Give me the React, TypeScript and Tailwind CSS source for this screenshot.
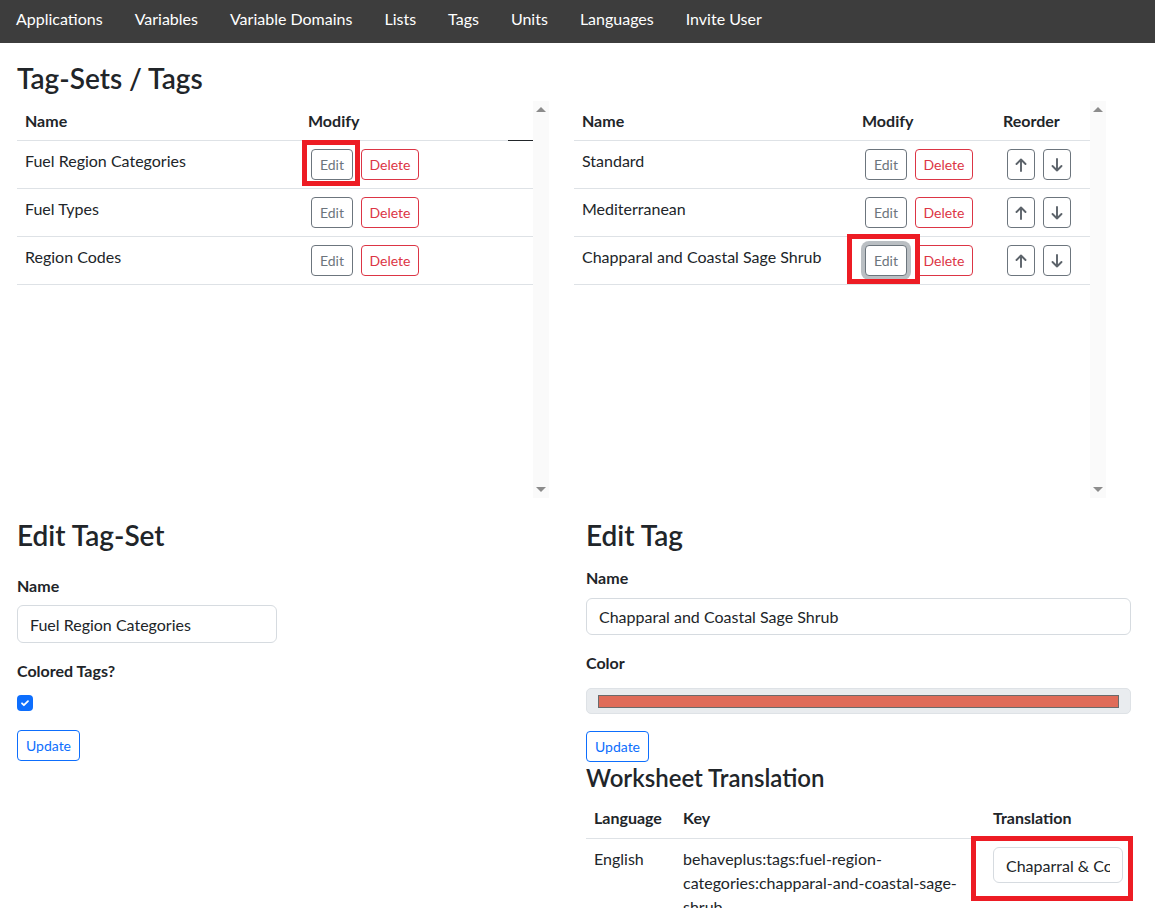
import React from "react";

const navItems = [
  "Applications",
  "Variables",
  "Variable Domains",
  "Lists",
  "Tags",
  "Units",
  "Languages",
  "Invite User",
];

const tagSets = ["Fuel Region Categories", "Fuel Types", "Region Codes"];
const tags = ["Standard", "Mediterranean", "Chapparal and Coastal Sage Shrub"];

const ArrowUp = () => (
  <svg width="14" height="16" viewBox="0 0 14 16" fill="none" stroke="currentColor" strokeWidth="1.9" strokeLinecap="round" strokeLinejoin="round">
    <path d="M7 14V2.5M2.5 7 7 2.5 11.5 7" />
  </svg>
);

const ArrowDown = () => (
  <svg width="14" height="16" viewBox="0 0 14 16" fill="none" stroke="currentColor" strokeWidth="1.9" strokeLinecap="round" strokeLinejoin="round">
    <path d="M7 2v11.5M2.5 9 7 13.5 11.5 9" />
  </svg>
);

// fake classic scrollbar beside each list box
const Scrollbar = () => (
  <div className="w-[16px] bg-[#fafafa] flex flex-col justify-between items-center py-[6px]">
    <div className="w-0 h-0 border-l-[5px] border-r-[5px] border-b-[5px] border-l-transparent border-r-transparent border-b-[#8c8c8c]" />
    <div className="w-0 h-0 border-l-[5px] border-r-[5px] border-t-[5px] border-l-transparent border-r-transparent border-t-[#8c8c8c]" />
  </div>
);

const Highlight = ({ className }: { className: string }) => (
  <span className={`absolute border-[5px] border-[#ed1c24] pointer-events-none ${className}`} />
);

const EditBtn = ({ focused }: { focused?: boolean }) => (
  <button
    className={
      focused
        ? "h-[31px] w-[42px] text-[14px] text-[#6c757d] border border-[#6c757d] rounded-[4px] bg-white shadow-[0_0_0_4px_rgba(130,138,145,0.55)]"
        : "h-[31px] w-[42px] text-[14px] text-[#6c757d] border border-[#6c757d] rounded-[4px] bg-white"
    }
  >
    Edit
  </button>
);

const DeleteBtn = () => (
  <button className="h-[31px] w-[58px] text-[14px] text-[#dc3545] border border-[#dc3545] rounded-[4px] bg-white">
    Delete
  </button>
);

const App = () => {
  return (
    <div className="font-['Lato',sans-serif] text-[#212529] text-[16px] bg-white min-h-[908px]">
      <nav className="h-[43px] bg-[#3d3d3d] flex items-center">
        {navItems.map((n) => (
          <span key={n} className="px-4 text-white leading-[24px] -mt-[6px]">
            {n}
          </span>
        ))}
      </nav>

      <div className="pl-[17px]">
        <h3 className="text-[28px] font-semibold leading-[34px] mt-[18px]">Tag-Sets / Tags</h3>

        <div className="flex gap-[25px] mt-[6px]">
          {/* tag sets */}
          <div className="flex h-[397px] w-[532px]">
            <div className="w-[516px]">
              <div className="flex h-[40px] border-b border-[#dee2e6] font-bold items-center">
                <div className="w-[283px] px-2">Name</div>
                <div className="w-[208px] px-2">Modify</div>
                <div className="w-[25px] self-end h-px bg-[#212529] -mb-px" />
              </div>
              {tagSets.map((t, i) => (
                <div key={t} className="flex h-[48px] border-b border-[#dee2e6]">
                  <div className="w-[283px] px-2 pt-2 leading-[24px]">{t}</div>
                  <div className="flex gap-2 pl-[11px] pt-[8px]">
                    <div className="relative">
                      <EditBtn />
                      {i === 0 && <Highlight className="-left-[9px] -top-[9px] w-[58px] h-[46px]" />}
                    </div>
                    <DeleteBtn />
                  </div>
                </div>
              ))}
            </div>
            <Scrollbar />
          </div>

          {/* tags */}
          <div className="flex h-[397px] w-[532px]">
            <div className="w-[516px]">
              <div className="flex h-[40px] border-b border-[#dee2e6] font-bold items-center">
                <div className="w-[280px] px-2">Name</div>
                <div className="w-[141px] px-2">Modify</div>
                <div className="px-2">Reorder</div>
              </div>
              {tags.map((t, i) => (
                <div key={t} className="flex h-[48px] border-b border-[#dee2e6]">
                  <div className="w-[280px] px-2 pt-2 leading-[24px]">{t}</div>
                  <div className="w-[141px] flex gap-2 pl-[11px] pt-[8px]">
                    <div className="relative">
                      <EditBtn focused={i === 2} />
                      {i === 2 && <Highlight className="-left-[18px] -top-[11px] w-[73px] h-[50px]" />}
                    </div>
                    <DeleteBtn />
                  </div>
                  <div className="flex gap-2 pl-[12px] pt-[8px]">
                    <button className="h-[31px] w-[28px] flex items-center justify-center text-[#5c636a] border border-[#6c757d] rounded-[4px]">
                      <ArrowUp />
                    </button>
                    <button className="h-[31px] w-[28px] flex items-center justify-center text-[#5c636a] border border-[#6c757d] rounded-[4px]">
                      <ArrowDown />
                    </button>
                  </div>
                </div>
              ))}
            </div>
            <Scrollbar />
          </div>
        </div>

        <div className="flex gap-[25px] mt-[20px]">
          {/* edit tag set */}
          <div className="w-[544px]">
            <h3 className="text-[28px] font-semibold leading-[34px]">Edit Tag-Set</h3>
            <div className="font-bold leading-[24px] mt-[22px]">Name</div>
            <input
              readOnly
              value="Fuel Region Categories"
              className="mt-[7px] w-[260px] h-[38px] px-3 border border-[#d6dbe0] rounded-[6px] outline-none"
            />
            <div className="font-bold leading-[24px] mt-[16px]">Colored Tags?</div>
            <div className="mt-[12px] w-[16px] h-[16px] rounded-[4px] bg-[#0d6efd] flex items-center justify-center">
              <svg width="12" height="12" viewBox="0 0 20 20">
                <path fill="none" stroke="#fff" strokeLinecap="round" strokeLinejoin="round" strokeWidth="3" d="m5 10.5 3.2 3.2L15 7" />
              </svg>
            </div>
            <button className="mt-[19px] h-[31px] px-2 text-[14px] text-[#0d6efd] border border-[#0d6efd] rounded-[4px]">
              Update
            </button>
          </div>

          {/* edit tag */}
          <div className="w-[545px]">
            <h3 className="text-[28px] font-semibold leading-[34px]">Edit Tag</h3>
            <div className="font-bold leading-[24px] mt-[14px]">Name</div>
            <input
              readOnly
              value="Chapparal and Coastal Sage Shrub"
              className="mt-[8px] w-full h-[37px] px-3 border border-[#d6dbe0] rounded-[6px] outline-none"
            />
            <div className="font-bold leading-[24px] mt-[16px]">Color</div>
            <div className="mt-[13px] h-[26px] w-full bg-[#e9ecef] border border-[#dee2e6] rounded-[5px] px-[11px] flex items-center">
              <div className="h-[13px] w-full bg-[#e06c59] border border-[#6b6b6b]" />
            </div>
            <button className="mt-[17px] h-[31px] px-2 text-[14px] text-[#0d6efd] border border-[#0d6efd] rounded-[4px]">
              Update
            </button>
            <h4 className="text-[24px] font-semibold leading-[29px] mt-[1px]">Worksheet Translation</h4>

            <div className="mt-[6px]">
              <div className="flex h-[41px] border-b border-[#dee2e6] font-bold items-center">
                <div className="w-[89px] px-2">Language</div>
                <div className="w-[310px] px-2">Key</div>
                <div className="px-2">Translation</div>
              </div>
              <div className="flex">
                <div className="w-[89px] px-2 pt-2 leading-[24px]">English</div>
                <div className="w-[310px] px-2 pt-2 leading-[24px]">
                  behaveplus:tags:fuel-region-
                  <br />
                  categories:chapparal-and-coastal-sage-
                  <br />
                  shrub
                </div>
                <div className="relative pl-[8px] pt-[8px]">
                  <input
                    readOnly
                    value="Chaparral & Coastal Sage Shrub"
                    className="w-[130px] h-[36px] px-3 border border-[#d6dbe0] rounded-[6px] outline-none"
                  />
                  <Highlight className="-left-[14px] -top-[3px] w-[162px] h-[65px]" />
                </div>
              </div>
            </div>
          </div>
        </div>
      </div>
    </div>
  );
};

export default App;
